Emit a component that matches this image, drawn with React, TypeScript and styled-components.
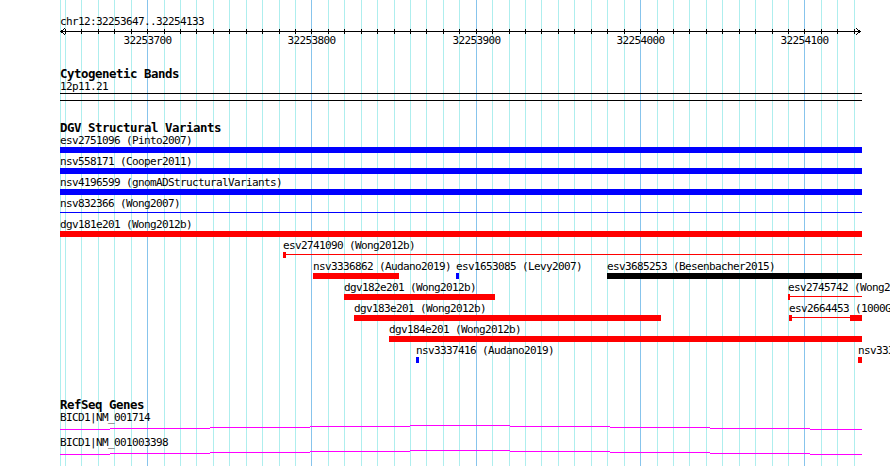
import React from 'react';
import styled, { createGlobalStyle } from 'styled-components';

// visible region chr12:32253647..32254133
const START = 32253647;
const BP_PX = 1.6433;
const PANEL_LEFT = 60;
const PANEL_WIDTH = 802;

const col = (bp: number) => Math.round(PANEL_LEFT + (bp - START) * BP_PX) - PANEL_LEFT;

const BLUE = '#0000ff';
const RED = '#ff0000';
const BLACK = '#000000';

const GlobalStyle = createGlobalStyle`
  html, body {
    margin: 0;
    padding: 0;
    background: #ffffff;
    overflow: hidden;
  }
  body {
    font-family: 'DejaVu Sans Mono', 'Liberation Mono', monospace;
    color: #000;
  }
`;

const Canvas = styled.div`
  position: relative;
  width: 890px;
  height: 466px;
  overflow: hidden;
  background: #ffffff;
`;

const GridLayer = styled.svg`
  position: absolute;
  top: 0;
  left: 0;
  width: 890px;
  height: 466px;
  pointer-events: none;
`;

const Panel = styled.div`
  position: relative;
  z-index: 1;
  margin-left: ${PANEL_LEFT}px;
  width: ${PANEL_WIDTH}px;
  display: flex;
  flex-direction: column;
`;

// 6px per character, like the image server's small font
const smallText = `
  font-size: 11px;
  letter-spacing: -0.62px;
  white-space: nowrap;
`;

const ChrLabel = styled.div`
  ${smallText}
  margin-top: 16px;
  height: 11px;
  line-height: 11px;
`;

const RulerSvg = styled.svg`
  display: block;
  overflow: visible;
`;

const TrackTitle = styled.div<{ $gap: number }>`
  margin-top: ${p => p.$gap}px;
  height: 12px;
  font-size: 12.4px;
  letter-spacing: -0.46px;
  line-height: 11.5px;
  font-weight: bold;
  white-space: nowrap;
`;

const SmallLabel = styled.div`
  ${smallText}
  margin-top: 1px;
  height: 11px;
  line-height: 11px;
`;

const BandBox = styled.div`
  margin-top: 1px;
  height: 6px;
  border-top: 1px solid #000;
  border-bottom: 1px solid #000;
`;

const Rows = styled.div`
  margin-top: 2px;
  display: flex;
  flex-direction: column;
`;

const FeatureRow = styled.div`
  position: relative;
  height: 21px;
`;

const FeatureLabel = styled.span`
  ${smallText}
  position: absolute;
  top: 0;
  line-height: 10px;
`;

const Glyph = styled.div<{ $color: string; $thin?: boolean }>`
  position: absolute;
  top: ${p => (p.$thin ? 13 : 11)}px;
  height: ${p => (p.$thin ? 1 : 6)}px;
  background: ${p => p.$color};
`;

const GeneList = styled.div`
  margin-top: 1px;
  display: flex;
  flex-direction: column;
`;

const GeneRow = styled.div`
  display: flex;
  flex-direction: column;
`;

const GeneLabel = styled.div`
  ${smallText}
  height: 11px;
  line-height: 11px;
`;

const GeneModel = styled.svg`
  display: block;
`;

type Part = { x: number; w: number; thin?: boolean };
type Feature = { name: string; x: number; color: string; parts: Part[] };

const full = (thin?: boolean): Part[] => [{ x: 0, w: PANEL_WIDTH, thin }];

const dgvRows: Feature[][] = [
  [{ name: 'esv2751096 (Pinto2007)', x: 0, color: BLUE, parts: full() }],
  [{ name: 'nsv558171 (Cooper2011)', x: 0, color: BLUE, parts: full() }],
  [{ name: 'nsv4196599 (gnomADStructuralVariants)', x: 0, color: BLUE, parts: full() }],
  [{ name: 'nsv832366 (Wong2007)', x: 0, color: BLUE, parts: full(true) }],
  [{ name: 'dgv181e201 (Wong2012b)', x: 0, color: RED, parts: full() }],
  [
    {
      name: 'esv2741090 (Wong2012b)', x: 223, color: RED,
      parts: [{ x: 223, w: 3 }, { x: 226, w: 576, thin: true }],
    },
  ],
  [
    { name: 'nsv3336862 (Audano2019)', x: 253, color: RED, parts: [{ x: 253, w: 86 }] },
    { name: 'esv1653085 (Levy2007)', x: 396, color: BLUE, parts: [{ x: 396, w: 3 }] },
    { name: 'esv3685253 (Besenbacher2015)', x: 547, color: BLACK, parts: [{ x: 547, w: 255 }] },
  ],
  [
    { name: 'dgv182e201 (Wong2012b)', x: 284, color: RED, parts: [{ x: 284, w: 151 }] },
    {
      name: 'esv2745742 (Wong2012b)', x: 728, color: RED,
      parts: [{ x: 728, w: 2 }, { x: 730, w: 72, thin: true }],
    },
  ],
  [
    { name: 'dgv183e201 (Wong2012b)', x: 294, color: RED, parts: [{ x: 294, w: 307 }] },
    {
      name: 'esv2664453 (1000GenomesPhase3)', x: 729, color: RED,
      parts: [{ x: 729, w: 3 }, { x: 732, w: 58, thin: true }, { x: 790, w: 12 }],
    },
  ],
  [{ name: 'dgv184e201 (Wong2012b)', x: 329, color: RED, parts: [{ x: 329, w: 473 }] }],
  [
    { name: 'nsv3337416 (Audano2019)', x: 356, color: BLUE, parts: [{ x: 356, w: 3 }] },
    { name: 'nsv3338470 (Audano2019)', x: 798, color: RED, parts: [{ x: 798, w: 4 }] },
  ],
];

const genes = ['BICD1|NM_001714', 'BICD1|NM_001003398'];

const minorTicks: number[] = [];
for (let bp = 32253650; bp <= 32254133; bp += 10) minorTicks.push(bp);
const majorTicks = minorTicks.filter(bp => bp % 100 === 0);

// intron hat, drawn as the stepped line the image server produces
const hatEdges = [0, 50, 150, 250, 350, 450, 550, 650, 750, PANEL_WIDTH];
const hatRise = [4, 3, 2, 1, 0, 1, 2, 3, 4];

const Ruler: React.FC = () => (
  <RulerSvg width={PANEL_WIDTH} height={20}>
    <g stroke="#000" strokeWidth={1} shapeRendering="crispEdges" fill="none">
      <line x1={0} y1={4.5} x2={801} y2={4.5} />
      {minorTicks.map(bp => (
        <line key={bp} x1={col(bp) + 0.5} y1={2} x2={col(bp) + 0.5} y2={7} />
      ))}
      <polyline points="5,1.5 0.5,4.5 5,7.5" />
      <polyline points="796,1.5 800.5,4.5 796,7.5" />
    </g>
    {majorTicks.map(bp => (
      <text
        key={bp}
        x={col(bp) + 0.5}
        y={16.5}
        textAnchor="middle"
        fontSize={11}
        letterSpacing={-0.62}
        fontFamily="'DejaVu Sans Mono', monospace"
        fill="#000"
      >
        {bp}
      </text>
    ))}
  </RulerSvg>
);

const Grid: React.FC = () => (
  <GridLayer viewBox="0 0 890 466">
    <g shapeRendering="crispEdges" strokeWidth={1}>
      <line x1={PANEL_LEFT + 0.5} y1={0} x2={PANEL_LEFT + 0.5} y2={466} stroke="#aeeeee" />
      {minorTicks.map(bp => {
        const x = PANEL_LEFT + col(bp) + 0.5;
        return (
          <line
            key={bp}
            x1={x}
            y1={0}
            x2={x}
            y2={466}
            stroke={bp % 100 === 0 ? '#87c4ec' : '#aeeeee'}
          />
        );
      })}
    </g>
  </GridLayer>
);

const App: React.FC = () => {
  return (
    <>
      <GlobalStyle />
      <Canvas>
        <Grid />
        <Panel>
          <ChrLabel>chr12:32253647..32254133</ChrLabel>
          <Ruler />

          <TrackTitle $gap={21}>Cytogenetic Bands</TrackTitle>
          <SmallLabel>12p11.21</SmallLabel>
          <BandBox />

          <TrackTitle $gap={21}>DGV Structural Variants</TrackTitle>
          <Rows>
            {dgvRows.map((row, i) => (
              <FeatureRow key={i}>
                {row.map(f => (
                  <React.Fragment key={f.name}>
                    <FeatureLabel style={{ left: f.x }}>{f.name}</FeatureLabel>
                    {f.parts.map((p, j) => (
                      <Glyph
                        key={j}
                        $color={f.color}
                        $thin={p.thin}
                        style={{ left: p.x, width: p.w }}
                      />
                    ))}
                  </React.Fragment>
                ))}
              </FeatureRow>
            ))}
          </Rows>

          <TrackTitle $gap={32}>RefSeq Genes</TrackTitle>
          <GeneList>
            {genes.map(g => (
              <GeneRow key={g}>
                <GeneLabel>{g}</GeneLabel>
                <GeneModel width={PANEL_WIDTH} height={14}>
                  <g stroke="#ff00ff" strokeWidth={1} shapeRendering="crispEdges">
                    {hatRise.map((r, k) => (
                      <line
                        key={k}
                        x1={hatEdges[k]}
                        x2={hatEdges[k + 1]}
                        y1={2.5 + r}
                        y2={2.5 + r}
                      />
                    ))}
                  </g>
                </GeneModel>
              </GeneRow>
            ))}
          </GeneList>
        </Panel>
      </Canvas>
    </>
  );
};

export default App;
